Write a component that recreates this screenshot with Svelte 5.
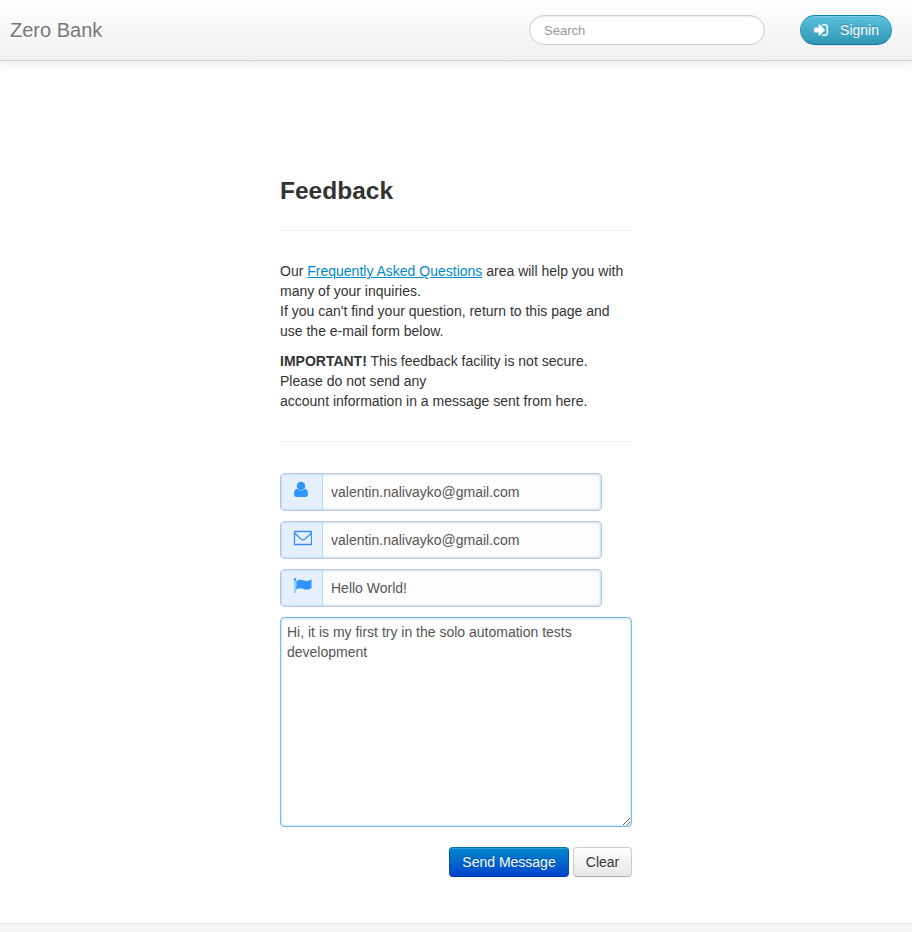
<script>
  const fields = [
    { icon: 'user', value: 'valentin.nalivayko@gmail.com' },
    { icon: 'mail', value: 'valentin.nalivayko@gmail.com' },
    { icon: 'flag', value: 'Hello World!' }
  ];
  const message = 'Hi, it is my first try in the solo automation tests development';
</script>

<div class="page">
  <header>
    <a class="brand" href="#home">Zero Bank</a>
    <input class="search" type="text" placeholder="Search" />
    <button class="signin">
      <svg width="16" height="16" viewBox="0 0 1792 1792"><path fill="#fff" stroke="#fff" stroke-width="40" d="M1312 896q0 26-19 45l-544 544q-19 19-45 19t-45-19-19-45v-288h-448q-26 0-45-19t-19-45v-384q0-26 19-45t45-19h448v-288q0-26 19-45t45-19 45 19l544 544q19 19 19 45zm352-352v704q0 119-84.500 203.500t-203.500 84.500h-320q-13 0-22.500-9.500t-9.500-22.500q0-4-1-20t-.5-26.500 3-23.500 10-19.500 20.500-6.500h320q66 0 113-47t47-113v-704q0-66-47-113t-113-47h-312l-11.500-1-11.500-3-8-5.500-7-9-2-13.500q0-4-1-20t-.5-26.500 3-23.500 10-19.500 20.500-6.500h320q119 0 203.500 84.500t84.500 203.500z" /></svg>
      <span>Signin</span>
    </button>
  </header>

  <main>
    <h3>Feedback</h3>
    <hr />
    <p>Our <a href="#faq">Frequently Asked Questions</a> area will help you with many of your inquiries.<br />If you can't find your question, return to this page and use the e-mail form below.</p>
    <p><strong>IMPORTANT!</strong> This feedback facility is not secure. Please do not send any<br />account information in a message sent from here.</p>
    <hr class="second" />

    <form>
      {#each fields as field}
        <div class="field">
          <span class="addon">
            <svg width="20" height="18" viewBox="0 0 20 18">
              {#if field.icon === 'user'}
                <circle cx="9" cy="5" r="4.200" fill="#3096fe" />
                <path fill="#3096fe" d="M5.200 7.800Q9 11.600 12.800 7.800C15.300 8 16 10.700 16 13.300Q16 16 13.500 16H4.500Q2 16 2 13.300C2 10.700 2.700 8 5.200 7.800Z" />
              {:else if field.icon === 'mail'}
                <path fill="none" stroke="#3b8ffb" stroke-width="1.300" stroke-linejoin="round" d="M2.500 2.500h17v13h-17zM2.500 4l6.500 6q2 1.700 4 0l6.500-6" />
              {:else}
                <path fill="#3096fe" fill-opacity=".7" d="M2.500 2h1.100v14h-1.100z" />
                <path fill="#3096fe" d="M4.300 4.200q3.900-2.500 7.700-.8 3.200 1.300 7.500-.9v8.800q-4.300 2.200-7.500.9-3.800-2-7.700.5z" />
                <circle cx="3" cy="2.300" r="1.200" fill="#3096fe" />
              {/if}
            </svg>
          </span>
          <input type="text" value={field.value} />
        </div>
      {/each}
      <textarea value={message}></textarea>
      <div class="actions">
        <button type="button" class="btn primary">Send Message</button>
        <button type="button" class="btn">Clear</button>
      </div>
    </form>
  </main>
  <footer></footer>
</div>

<style>
  :global(body) { margin: 0; background: #fff; }
  .page {
    height: 932px;
    overflow: hidden;
    display: flex;
    flex-direction: column;
    font: 14px/20px "Liberation Sans", Arial, sans-serif;
    color: #333;
  }
  header {
    box-sizing: border-box;
    height: 61px;
    flex: none;
    display: flex;
    align-items: center;
    padding: 0 20px 0 10px;
    background: linear-gradient(#fff, #f0f0f0);
    border-bottom: 1px solid #d0d0d0;
    box-shadow: 0 1px 10px rgba(0, 0, 0, 0.1);
  }
  .brand {
    font-size: 20px;
    color: #777;
    text-decoration: none;
    text-shadow: 0 1px 0 #fff;
  }
  .search {
    box-sizing: border-box;
    width: 236px;
    height: 30px;
    margin: 0 35px 0 auto;
    padding: 4px 14px;
    border: 1px solid #ccc;
    border-radius: 15px;
    box-shadow: inset 0 1px 1px rgba(0, 0, 0, 0.075);
    font: 13px/20px "Liberation Sans", Arial, sans-serif;
    outline: none;
  }
  .search::placeholder { color: #999; }
  .signin {
    box-sizing: border-box;
    width: 92px;
    height: 30px;
    padding: 0 12px 0 12px;
    display: flex;
    align-items: center;
    justify-content: space-between;
    border: 1px solid;
    border-color: #0d82ad #2f96b4 #0872a0;
    border-radius: 15px;
    background: linear-gradient(#5bc0de, #2f96b4);
    box-shadow: inset 0 1px 0 rgba(255, 255, 255, 0.2), 0 1px 2px rgba(0, 0, 0, 0.05);
    color: #fff;
    font: 14px/20px "Liberation Sans", Arial, sans-serif;
    text-shadow: 0 -1px 0 rgba(0, 0, 0, 0.25);
  }
  main {
    width: 352px;
    margin: 110px auto 0;
  }
  h3 {
    margin: 0;
    font-size: 24.500px;
    line-height: 40px;
  }
  hr {
    height: 0;
    margin: 19px 0 30px;
    border: 0;
    border-top: 1px solid #eee;
  }
  .second { margin: 30px 0 31px; }
  p { margin: 0 0 10px; }
  a { color: #0088cc; }
  .field {
    box-sizing: border-box;
    position: relative;
    width: 322px;
    height: 38px;
    display: flex;
    margin-bottom: 10px;
    border: 1px solid #bfc6cf;
    border-radius: 4px;
    background: #fdfdfd;
  }
  .field::after {
    content: "";
    position: absolute;
    inset: 0;
    border-radius: 3px;
    box-shadow: inset 0 0 2px 1px #bfdffd;
    pointer-events: none;
  }
  .addon {
    box-sizing: border-box;
    width: 42px;
    padding: 7px 0 0 11px;
    border-right: 1px solid #b5d8fa;
    background: #e4f0fe;
    border-radius: 3px 0 0 3px;
  }
  .addon svg { display: block; }
  .field input {
    flex: 1;
    min-width: 0;
    padding: 0 8px;
    border: 0;
    background: transparent;
    outline: none;
    color: #555;
    font: 14px/20px "Liberation Sans", Arial, sans-serif;
  }
  textarea {
    box-sizing: border-box;
    display: block;
    width: 352px;
    height: 210px;
    margin: 0;
    padding: 4px 6px;
    border: 1px solid #75b9f0;
    border-radius: 4px;
    box-shadow: inset 0 0 2px 1px #c9e3fb;
    outline: none;
    color: #555;
    font: 14px/20px "Liberation Sans", Arial, sans-serif;
    resize: both;
  }
  .actions {
    display: flex;
    justify-content: flex-end;
    gap: 4px;
    margin-top: 20px;
  }
  .btn {
    box-sizing: border-box;
    width: 59px;
    height: 30px;
    padding: 0;
    border: 1px solid #ccc;
    border-bottom-color: #b3b3b3;
    border-radius: 4px;
    background: linear-gradient(#fff, #e6e6e6);
    box-shadow: inset 0 1px 0 rgba(255, 255, 255, 0.2), 0 1px 2px rgba(0, 0, 0, 0.05);
    color: #333;
    font: 14px/20px "Liberation Sans", Arial, sans-serif;
    text-shadow: 0 1px 1px rgba(255, 255, 255, 0.75);
  }
  .primary {
    width: 120px;
    background: linear-gradient(#0088cc, #0044cc);
    border-color: #0071ae #0055bb #0037a4;
    color: #fff;
    text-shadow: 0 -1px 0 rgba(0, 0, 0, 0.25);
  }
  footer {
    flex: none;
    height: 8px;
    margin-top: auto;
    border-top: 1px solid #e5e5e5;
    background: #f5f5f5;
  }
</style>
